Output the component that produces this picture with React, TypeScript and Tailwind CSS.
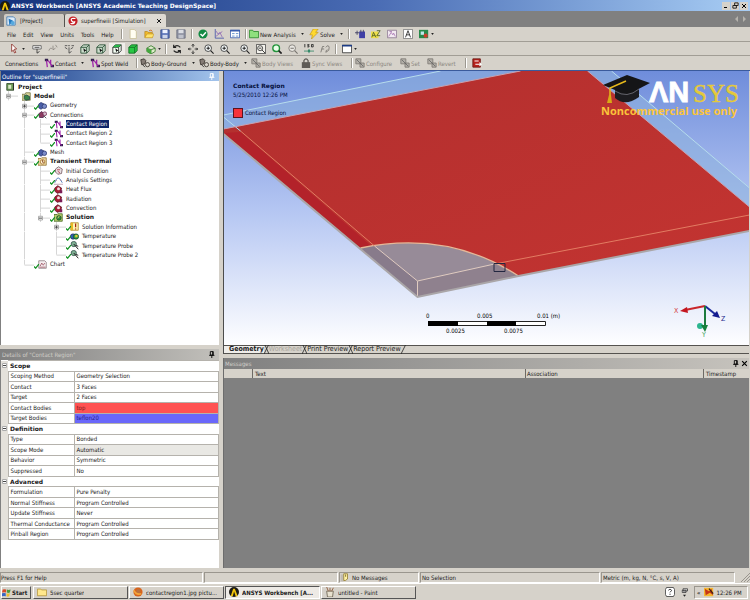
import type { ReactNode } from "react";

const SUNK = "border border-t-[#9a968e] border-l-[#9a968e] border-r-white border-b-white";
const STRONG = "font-['DejaVu_Sans','Liberation_Sans',sans-serif] font-bold";

// small toolbar and tree drawings, all on a 12 x 12 grid
const art: Record<string, ReactNode> = {
  ansys: (
    <>
      <circle cx="6" cy="6" r="6" fill="#1c1a14" />
      <path d="M2 11 5 2h2L4.500 11zM7 2l3.500 9H8L6 5z" fill="#f2c50c" />
    </>
  ),
  project: (
    <>
      <path d="M1 1h8l2 2v8H1z" fill="#dcebf8" stroke="#3f77ad" />
      <path d="M3 3l6 3-5 5z" fill="#257ac0" />
      <circle cx="8" cy="8.500" r="2.500" fill="#57a9de" />
    </>
  ),
  sim: (
    <>
      <circle cx="6" cy="6" r="5.500" fill="#c41f25" />
      <path d="M9 3Q3 2 4 5t4 2q0 3-5 2" fill="none" stroke="#fff" strokeWidth="1.500" />
    </>
  ),
  fresh: <path d="M2.500.5h5l2.500 2.500v8.500H2.500z" fill="#fffef2" stroke="#c9bf97" />,
  open: (
    <>
      <path d="M1 10V3h3l1 1h5v6z" fill="#f0b92c" stroke="#a87813" strokeWidth=".7" />
      <path d="M1 10.500 3.500 6H12l-2 4.500z" fill="#ffe36b" stroke="#b88b1c" strokeWidth=".6" />
      <path d="M6 2q3-2 4 1" fill="none" stroke="#d16b1c" />
    </>
  ),
  save: (
    <>
      <path d="M1 1h10v10H1z" fill="#5a74b8" stroke="#33498a" />
      <path d="M3 1h6v4H3z" fill="#edf2ff" />
      <path d="M3 7h6v4H3z" fill="#ccd5ea" />
    </>
  ),
  saveOff: (
    <>
      <path d="M1 1h10v10H1z" fill="#8f93a2" stroke="#6c7080" />
      <path d="M3 1h6v4H3z" fill="#dbdde3" />
      <path d="M3 7h6v4H3z" fill="#bfc2cc" />
    </>
  ),
  ok: (
    <>
      <circle cx="6" cy="6" r="5.500" fill="#128a43" />
      <path d="m3 6 2.500 2.500L9.500 4" fill="none" stroke="#fff" strokeWidth="1.700" />
    </>
  ),
  graph: (
    <>
      <path d="M1.500 0v11H12" fill="none" stroke="#4457a8" />
      <path d="m2 2 3 4 2-2 3 6M2 9l8-6" fill="none" stroke="#8f6bb6" />
    </>
  ),
  sheet: (
    <>
      <path d="M.5 1.500h11v9H.5z" fill="#fff" stroke="#3a5eae" />
      <path d="M0 1h12v2H0z" fill="#3a5eae" />
      <path d="M2.500 5.500h3M7 5.500h3M2.500 8.500h3M7 8.500h3" stroke="#4f83c6" />
    </>
  ),
  folder: <path d="M.5 10.500v-9h4l1 1.500h6v7.500z" fill="#8fe07e" stroke="#2c8a2c" />,
  bolt: <path d="M5 0h6L8 4h3L3 12l1-5H1z" fill="#ffd92e" stroke="#bc8d0e" strokeWidth=".7" />,
  plusBox: (
    <>
      <path d="M5 3h7v8H5z" fill="#3f3fa6" />
      <path d="M0 4.500h5M2.500 2v5M7 1v3M10 1v3" stroke="#38385c" />
    </>
  ),
  az: (
    <>
      <path d="M0 3h9v8H0z" fill="#efe04c" />
      <path d="M1 10 3 4l3 6M2 8h3M7 2h4L7 8h4" fill="none" stroke="#4e5f24" />
    </>
  ),
  image: (
    <>
      <path d="M.5 1.500h11v9H.5z" fill="#f2e9f1" stroke="#8d7892" />
      <path d="m2 9 3-5 2 3 1-2 2 4M3 3h3" fill="none" stroke="#a97ab3" />
    </>
  ),
  letter: (
    <>
      <path d="M.5.5h11v11H.5z" fill="#fff" stroke="#777" />
      <path d="m3 10 3-8 3 8M4 7h4" fill="none" stroke="#222" />
    </>
  ),
  photo: (
    <>
      <path d="M0 1h11v10H0z" fill="#28884a" />
      <path d="M2 3h4v4H2z" fill="#bde7ea" />
      <circle cx="8" cy="8" r="2.500" fill="#ca3d2b" />
    </>
  ),
  cursor: <path d="m2 0 6 6-3 .3L7 10l-1.500.8L4 7.500 2 9z" fill="#fff" stroke="#8d2f26" />,
  tag: (
    <>
      <path d="M1 2h10v4H1z" fill="#fff" stroke="#555" />
      <path d="M3 4h6M6 6v5l3-2" fill="none" stroke="#333" />
    </>
  ),
  pick: <path d="M1 8q2-5 4-2M6 2v5l3-2M9 1l2 3" fill="none" stroke="#8a8680" />,
  multi: <path d="M1 2h3M5 2h2M9 2h3M1 4l3 2M11 4 8 6M6 4v7l3-2" fill="none" stroke="#444" />,
  cube: (
    <>
      <path d="M1 4h7v7H1zM1 4l3-3h7v7l-3 3M8 4l3-3" fill="#cbdccb" stroke="#234a30" />
      <path d="m4 5 4 3-2 .500L5 10z" fill="#111" />
    </>
  ),
  cubeOn: (
    <>
      <path d="M1 4h7v7H1zM1 4l3-3h7v7l-3 3M8 4l3-3" fill="#f4fff4" stroke="#222" />
      <path d="m1 4 3-3h7L8 4z" fill="#29b74a" />
      <path d="m4 5 4 3-2 .500L5 10z" fill="#111" />
    </>
  ),
  cubeFull: <path d="M1 4h7v7H1zM1 4l3-3h7v7l-3 3M8 4l3-3" fill="#28c744" stroke="#126b24" />,
  orbitCube: (
    <>
      <path d="m1 5 5-3 5 3v4l-5 3-5-3zM1 5l5 2 5-2M6 7v5" fill="#dcefc8" stroke="#397b2f" />
      <path d="m1 5 5 2v5L1 9z" fill="#43a83d" />
    </>
  ),
  rotate: <path d="M10 4Q6 0 2 4M2 1v3h3M2 8q4 4 8 0M10 11V8H7" fill="none" stroke="#222" strokeWidth="1.400" />,
  pan: <path d="M6 0v4M6 8v4M0 6h4M8 6h4M4.500 2 6 .500 7.500 2M4.500 10 6 11.500 7.500 10M2 4.500.5 6 2 7.500M10 4.500 11.500 6 10 7.500" fill="none" stroke="#222" />,
  zoomIn: (
    <>
      <circle cx="5" cy="5" r="4" fill="#f3f7f7" stroke="#333" />
      <path d="m8 8 3.500 3.500M3 5h4M5 3v4" stroke="#222" strokeWidth="1.300" />
    </>
  ),
  zoomBox: (
    <>
      <path d="M.5.5h11v11H.5z" fill="#f4f2ec" stroke="#444" />
      <circle cx="5" cy="5" r="3" fill="none" stroke="#333" />
      <path d="m7 7 4 4M3.500 5h3" stroke="#222" />
    </>
  ),
  zoomFit: (
    <>
      <circle cx="5" cy="5" r="4" fill="#eaffea" stroke="#23943b" strokeWidth="1.700" />
      <path d="m8 8 3.500 3.500" stroke="#222" strokeWidth="2" />
    </>
  ),
  zoomOff: (
    <>
      <circle cx="5" cy="5" r="4" fill="#e9e7e2" stroke="#77746f" />
      <path d="m8 8 3.500 3.500M3 5h4" stroke="#77746f" strokeWidth="1.300" />
    </>
  ),
  iso: (
    <>
      <path d="M1 0v4M4 .5h2.500M4 2h2v1.500H4M9 .5h2v3H9z" fill="none" stroke="#222" />
      <path d="M0 8.500h12M6 6v5" stroke="#368a6a" />
      <circle cx="6" cy="8.500" r="1.500" fill="#368a6a" />
    </>
  ),
  look: <path d="M1 10 3 3h2M2 6h3M7 4q3-4 4 0T7 10q0-3 2-3" fill="none" stroke="#77746f" />,
  win: (
    <>
      <path d="M.5 1.500h11v9H.5z" fill="#fff" stroke="#333" />
      <path d="M0 1h12v2H0z" fill="#1d3c86" />
    </>
  ),
  contact: (
    <>
      <path d="M1 1h4v3H1zM8 8h4v3H8z" fill="#32204c" />
      <path d="m3 3 1 8M5 3l5 7M8 2v6" fill="none" stroke="#9c1fa8" strokeWidth="1.500" />
    </>
  ),
  bodies: (
    <>
      <path d="m1 2 4-1 2 2-1 4-4 1z" fill="#857c76" stroke="#38322d" />
      <circle cx="9" cy="8" r="2.500" fill="#d8d4cc" stroke="#38322d" />
      <path d="m3 8 3 3" stroke="#222" />
    </>
  ),
  bodiesOff: (
    <>
      <path d="M1 1h6v6H1zM6 6h5v5H6z" fill="#b3afa8" stroke="#7d7973" />
      <path d="m2 2 8 8" stroke="#666" />
    </>
  ),
  lock: (
    <>
      <path d="M3.500 6V3q2.500-4 5 0v3" fill="none" stroke="#55514c" strokeWidth="1.400" />
      <path d="M1 5h10v7H1z" fill="#5f5b56" />
    </>
  ),
  exit: (
    <>
      <path d="M1 1h9v10H1z" fill="#b6221c" stroke="#6a1712" />
      <path d="M3 3.500h5M4 7.500h7M9 5.500l2 2-2 2" fill="none" stroke="#fff" strokeWidth="1.300" />
    </>
  ),
  geometry: (
    <>
      <path d="m1 4 3-2 4 2v4l-4 3-3-2z" fill="#4b5fa8" stroke="#26336e" />
      <circle cx="8.500" cy="7" r="3" fill="#7b8cc8" stroke="#26336e" />
    </>
  ),
  links: (
    <>
      <path d="m1 5 4-3 3 3-1 5H2z" fill="#8c3b60" stroke="#452046" />
      <circle cx="9" cy="5" r="2.500" fill="#d7bccc" stroke="#6d244b" />
      <path d="m8 8 3 3" stroke="#233" />
    </>
  ),
  projectTree: (
    <>
      <path d="M1 2h9v9H1z" fill="#6b9a55" stroke="#273d20" />
      <path d="M3 4h4v5H3z" fill="#dbe8c9" />
      <path d="M10 1v10" stroke="#222" />
    </>
  ),
  model: (
    <>
      <path d="M0 3h4l1-2h6v10H0z" fill="#d9d59a" stroke="#6e6b3b" />
      <path d="m3 5 3-1 4 2v4l-5 1-2-2z" fill="#398347" stroke="#1c3f44" />
    </>
  ),
  thermal: (
    <>
      <path d="M0 2h4l1-1h6v10H0z" fill="#ecd8a0" stroke="#8d6d2c" />
      <circle cx="6" cy="6.500" r="3" fill="#fff2cf" stroke="#a06620" />
      <path d="M6 4v3h2" fill="none" stroke="#7c3d18" />
    </>
  ),
  initial: (
    <>
      <path d="m2 4 4-3 5 3-1 6-5 1-3-3z" fill="#e7dfe1" stroke="#6e5258" />
      <path d="M4 5h4M5 7l3 2" stroke="#b02a3c" />
    </>
  ),
  settings: (
    <>
      <path d="M1 9q4-13 10 0" fill="none" stroke="#5a87bd" strokeWidth="1.300" />
      <path d="M0 11h12M2 6h2M8 6h2" stroke="#b08fa0" />
    </>
  ),
  load: (
    <>
      <path d="m1 4 4-3 5 3-1 6-5 1-3-3z" fill="#a82036" stroke="#541322" />
      <circle cx="6" cy="5" r="2" fill="#f1dde0" />
      <path d="M8 7h3v4H8z" fill="#7a1b55" />
    </>
  ),
  solution: (
    <>
      <path d="M0 2h4l1-1h6v10H0z" fill="#b6cf6e" stroke="#42631c" />
      <circle cx="6.500" cy="6.500" r="3" fill="#2b8c3d" stroke="#17441f" />
      <path d="M5 7 7 4" stroke="#ffe76a" />
    </>
  ),
  info: (
    <>
      <path d="M1 1h10v10H1z" fill="#fff3b0" stroke="#a7801b" />
      <path d="M1 1h3v10H1z" fill="#e7b824" />
      <path d="M7.500 2v5M7.500 8.500V10" stroke="#a01f12" strokeWidth="1.600" />
    </>
  ),
  temp: (
    <>
      <circle cx="4" cy="6" r="3.500" fill="#2f5fb4" stroke="#1e2b60" />
      <circle cx="8" cy="6" r="3.500" fill="#2fa04c" stroke="#17441f" />
      <path d="M7 4h3v3H7z" fill="#e6c733" />
    </>
  ),
  probe: (
    <>
      <circle cx="5" cy="4" r="3.500" fill="#7fae93" stroke="#2a4b42" />
      <path d="m5 4 6 7M8 6l3 1" stroke="#222" strokeWidth="1.300" />
    </>
  ),
  chart: (
    <>
      <path d="M1 1h8l2 2v8H1z" fill="#f5eef0" stroke="#85757b" />
      <path d="m3 8 2-4 2 3 2-3M2 9.500h8" fill="none" stroke="#9b4f5f" />
    </>
  ),
  firefox: (
    <>
      <circle cx="6" cy="6" r="5.500" fill="#d9641b" />
      <circle cx="6.500" cy="5" r="2.500" fill="#b9703f" />
      <path d="M1 4q3 6 9 4" stroke="#f3a63a" strokeWidth="2" fill="none" />
    </>
  ),
  dir: <path d="M.5 10.500v-8h4l1 1h6v7z" fill="#ffe88c" stroke="#b6983d" />,
  paint: (
    <>
      <path d="M2 5h8l-1 7H3z" fill="#e8e2d0" stroke="#6c6452" />
      <path d="M4 5 2 0M6 5V1M8 5l2-4" stroke="#8b5330" />
    </>
  ),
  flag: (
    <>
      <path d="M1 2q2-1 4.500 0v4Q3 5 0 6z" fill="#d84b2a" />
      <path d="M6.500 2q2 1 5 0l-1 4q-2 1-4 0z" fill="#4d9b3e" />
      <path d="M0 7q3-1 5 0v4q-2-1-5 0z" fill="#3a66c2" />
      <path d="M6 7q2 1 4.500 0l-1 4q-2 1-3.500 0z" fill="#ecbd2e" />
    </>
  ),
  note: (
    <>
      <path d="M1 2h4v9H1z" fill="#c0bbb2" />
      <path d="M5 1h5v7l-3 2H5z" fill="#fff2a6" stroke="#8d7420" />
      <path d="M7.500 2v3" stroke="#5c4d10" />
    </>
  ),
  help: (
    <>
      <path d="M2 .5h8L11.500 3v6L10 11.500H2L.5 9V3z" fill="#fff" stroke="#333" />
      <path d="M4 4q2-3 4 0L6 6.500M6 8v1.500" fill="none" stroke="#222" />
    </>
  ),
  net: (
    <>
      <path d="M4 1h6v3H4zM3 3h5v3H3z" fill="#ddd" stroke="#333" />
      <path d="m4 9 2 2.500L8 9z" fill="#222" />
    </>
  ),
  shield: (
    <>
      <path d="M0 1h11v10H0z" fill="#f4b730" />
      <path d="m1 2 5 3 3-3 2 8-4-3-5 3z" fill="#c63519" />
      <path d="m6 2 5 6" stroke="#3c210e" strokeWidth="1.500" />
    </>
  ),
  pin: <path d="M4 1h5v6H4zM2 7.500h9M6.500 8v4M8 1v6" fill="none" stroke="currentColor" strokeWidth="1.500" />,
  cross: <path d="m2 2 8 8m0-8-8 8" stroke="currentColor" strokeWidth="2" />,
};

function Icon({ name, className = "size-[10px]" }: { name: string; className?: string }) {
  return (
    <svg viewBox="0 0 12 12" className={`${className} shrink-0`} aria-hidden="true">
      {art[name]}
    </svg>
  );
}

function Caret() {
  return (
    <svg viewBox="0 0 4 3" className="h-[2px] w-[3px] shrink-0" aria-hidden="true">
      <path d="M0 0h4L2 3z" fill="#222" />
    </svg>
  );
}

function Sep() {
  return <span className="mx-[2px] h-[10px] w-[2px] shrink-0 border-l border-[#9b978f] bg-white" />;
}

function Tool({ name, label, caret }: { name: string; label: string; caret?: boolean }) {
  return (
    <button aria-label={label} className={`flex h-3 shrink-0 items-center justify-center ${caret ? "w-5 gap-[2px]" : "w-4"}`}>
      <Icon name={name} />
      {caret && <Caret />}
    </button>
  );
}

type TextToolProps = { name: string; text: string; width: string; caret?: boolean; off?: boolean };

function TextTool({ name, text, width, caret, off }: TextToolProps) {
  return (
    <button disabled={off} className={`flex shrink-0 items-center gap-px whitespace-nowrap ${width} ${off ? "text-[#8b8780]" : ""}`}>
      <Icon name={name} />
      {text}
      {caret && <span className="ml-1"><Caret /></span>}
    </button>
  );
}

// guides: one character for each 16px cell to the left of the icon
const tree = [
  { guides: "", icon: "projectTree", text: "Project", bold: true },
  { guides: "-", icon: "model", text: "Model", bold: true },
  { guides: " +", icon: "geometry", text: "Geometry", check: true },
  { guides: " -", icon: "links", text: "Connections", check: true },
  { guides: " |t", icon: "contact", text: "Contact Region", check: true, selected: true },
  { guides: " |t", icon: "contact", text: "Contact Region 2", check: true },
  { guides: " |l", icon: "contact", text: "Contact Region 3", check: true },
  { guides: " t", icon: "geometry", text: "Mesh", check: true },
  { guides: " -", icon: "thermal", text: "Transient Thermal", bold: true, check: true },
  { guides: " |t", icon: "initial", text: "Initial Condition", check: true },
  { guides: " |t", icon: "settings", text: "Analysis Settings", check: true },
  { guides: " |t", icon: "load", text: "Heat Flux", check: true },
  { guides: " |t", icon: "load", text: "Radiation", check: true },
  { guides: " |t", icon: "load", text: "Convection", check: true },
  { guides: " |-", icon: "solution", text: "Solution", bold: true, check: true },
  { guides: " | +", icon: "info", text: "Solution Information", check: true },
  { guides: " | t", icon: "temp", text: "Temperature", check: true },
  { guides: " | t", icon: "probe", text: "Temperature Probe", check: true },
  { guides: " | l", icon: "probe", text: "Temperature Probe 2", check: true },
  { guides: " l", icon: "chart", text: "Chart", check: true },
];

function Guide({ kind }: { kind: string }) {
  const box = kind === "+" || kind === "-";
  return (
    <svg viewBox="0 0 16 10" preserveAspectRatio="none" className="h-full w-4 shrink-0" aria-hidden="true">
      {kind !== " " && kind !== "l" && <path d="M6.500 0v10" stroke="#d4d4d4" />}
      {kind === "l" && <path d="M6.500 0v5" stroke="#d4d4d4" />}
      {kind !== " " && kind !== "|" && <path d="M6.500 5.500H16" stroke="#d4d4d4" />}
      {box && <path d="M4.500 3.500h4v4h-4z" fill="#fff" stroke="#aaa" />}
      {box && <path d={kind === "+" ? "M5 5.500h3M6.500 4v3" : "M5 5.500h3"} stroke="#444" />}
    </svg>
  );
}

const details = [
  {
    group: "Scope",
    rows: [
      { name: "Scoping Method", value: "Geometry Selection" },
      { name: "Contact", value: "3 Faces" },
      { name: "Target", value: "2 Faces" },
      { name: "Contact Bodies", value: "top", tone: "bg-[#ff5252] text-[#7d1c1c]" },
      { name: "Target Bodies", value: "teflon20", tone: "bg-[#6a67fa] text-[#25238a]" },
    ],
  },
  {
    group: "Definition",
    rows: [
      { name: "Type", value: "Bonded" },
      { name: "Scope Mode", value: "Automatic", tone: "bg-[#e9e8e4]" },
      { name: "Behavior", value: "Symmetric" },
      { name: "Suppressed", value: "No" },
    ],
  },
  {
    group: "Advanced",
    rows: [
      { name: "Formulation", value: "Pure Penalty" },
      { name: "Normal Stiffness", value: "Program Controlled" },
      { name: "Update Stiffness", value: "Never" },
      { name: "Thermal Conductance", value: "Program Controlled" },
      { name: "Pinball Region", value: "Program Controlled" },
    ],
  },
];

function Outline() {
  return (
    <section className="flex min-h-0 flex-[274] flex-col border-l border-[#808080] bg-white">
      <h2 className="flex h-[10px] shrink-0 items-center justify-between bg-linear-to-r from-[#1c3d88] to-[#a3c4ec] pr-1 pl-px text-white">
        Outline for "superfineiii"
        <Icon name="pin" className="size-[7px]" />
      </h2>
      <ul className="mt-px flex h-[187px] flex-col">
        {tree.map((n) => (
          <li key={n.text} className="flex min-h-0 flex-1 items-center pl-px leading-[8px]">
            {[...n.guides].map((g, i) => (
              <Guide key={i} kind={g} />
            ))}
            <span className="relative flex w-4 shrink-0 justify-center">
              <Icon name={n.icon} className="size-[9px]" />
              {n.check && (
                <svg viewBox="0 0 6 6" className="absolute bottom-0 left-0 size-[5px]" aria-hidden="true">
                  <path d="m0 3 2 2 4-5" fill="none" stroke="#159326" strokeWidth="1.500" />
                </svg>
              )}
            </span>
            <button className={`${n.bold ? STRONG : ""} ${n.selected ? "bg-[#0d2468] pr-[2px] text-white" : ""}`}>{n.text}</button>
          </li>
        ))}
      </ul>
    </section>
  );
}

function Details() {
  return (
    <section className="flex min-h-0 flex-[219] flex-col border-l border-[#808080] bg-white">
      <h2 className="flex h-[11px] shrink-0 items-center justify-between bg-linear-to-r from-[#808080] to-[#c2c0bb] pr-1 pl-px text-[#d0cec8]">
        Details of "Contact Region"
        <Icon name="pin" className="size-[7px] text-black" />
      </h2>
      <table className="h-[180px] w-full table-fixed border-collapse leading-[8px]">
        <colgroup>
          <col className="w-[7px]" />
          <col className="w-[66px]" />
          <col />
        </colgroup>
        {details.map((d) => (
          <tbody key={d.group}>
            <tr>
              <td className="bg-[#e4e1db] p-0">
                <svg viewBox="0 0 7 7" className="size-[7px]" aria-hidden="true">
                  <path d="M1.500 1.500h4v4h-4z" fill="#fff" stroke="#aaa" />
                  <path d="M2 3.500h3" stroke="#444" />
                </svg>
              </td>
              <th colSpan={2} className={`border-y border-[#b5b2ac] py-0 pl-[2px] text-left ${STRONG}`}>{d.group}</th>
            </tr>
            {d.rows.map((r) => (
              <tr key={r.name}>
                <td className="bg-[#e4e1db] p-0" />
                <th className="border border-[#b5b2ac] py-0 pl-[2px] text-left font-normal whitespace-nowrap">{r.name}</th>
                <td className={`border border-[#b5b2ac] py-0 pl-[2px] ${r.tone ?? ""}`}>{r.value}</td>
              </tr>
            ))}
          </tbody>
        ))}
      </table>
    </section>
  );
}

function Scene() {
  return (
    <svg viewBox="0 0 526 274" preserveAspectRatio="xMidYMid slice" className="absolute inset-0 size-full" aria-hidden="true">
      <defs>
        <linearGradient id="sky" x1="0" y1="0" x2="0" y2="1">
          <stop offset="0" stopColor="#6f8ddb" />
          <stop offset=".5" stopColor="#b3c5f2" />
          <stop offset="1" stopColor="#fefeff" />
        </linearGradient>
        <linearGradient id="plate" x1="0" y1="0" x2="1" y2="1">
          <stop offset="0" stopColor="#b22f2e" />
          <stop offset="1" stopColor="#c43431" />
        </linearGradient>
      </defs>
      <path d="M0 0h526v274H0z" fill="url(#sky)" />
      <path d="M0 44 217 0h80L0 60zM364 0h24l138 117v20z" fill="#8fb3dd" fillOpacity=".6" />
      <path d="M0 58 297 0h67l162 136v24L295 205 194 226 0 63z" fill="url(#plate)" />
      <path d="m0 62 137 115 12-1L17 61z" fill="#b3222a" />
      <path d="M137 177q88-18 158 28l-101 21z" fill="#978b98" />
      <path d="m137 177 14-2 43 35v16z" fill="#887b8b" />
      <path d="m194 210 77-17 24 12-101 21z" fill="#8f818e" />
      <path d="M137 177q88-18 158 28" fill="none" stroke="#e5b999" strokeWidth="1.300" />
      <path d="m17 60 134 115M271 193l255-49" fill="none" stroke="#e27c62" />
      <path d="m151 175 43 35 77-17M194 210v16" fill="none" stroke="#e0cbc0" />
      <path d="m0 44 217-44M388 0l138 117M0 46l17 14" fill="none" stroke="#b6dcec" />
      <path d="m0 58 297-58M364 0l162 136" fill="none" stroke="#c9a1ae" />
      <path d="m0 63 194 163 101-21 231-45" fill="none" stroke="#aaa6a8" strokeWidth="2" />
      <path d="M270.500 192.500h11v8h-11z" fill="none" stroke="#222640" />
    </svg>
  );
}

function Logo() {
  return (
    <div className="absolute top-[2px] right-[10px] w-[138px]">
      <svg viewBox="0 0 138 46" className="w-full" role="img" aria-label="ANSYS Noncommercial use only">
        <path d="M14 16v9q10 9 24-1v-9z" fill="#1c1c20" />
        <path d="m2 12 24-10 23 8-23 12z" fill="#151517" />
        <path d="M14 18q12 8 24-2" fill="none" stroke="#64646c" />
        <path d="M25 8 9 15v14" fill="none" stroke="#e6b91c" strokeWidth="1.500" />
        <path d="m8 22-2 8h5l-1-8z" fill="#d9a915" />
        <text x="48" y="29" fontSize="29" fontWeight="700" fill="#fff" stroke="#fff" strokeWidth=".8" fontFamily="Liberation Sans, sans-serif">ΛN</text>
        <text x="92" y="29" fontSize="25" fill="#e4c93a" stroke="#e4c93a" strokeWidth=".4" fontFamily="Liberation Serif, serif">SYS</text>
        <text x="0" y="42" fontSize="11" fontWeight="700" fill="#fbc43a" fontFamily="Open Sans, sans-serif">Noncommercial use only</text>
      </svg>
    </div>
  );
}

function Ruler() {
  return (
    <svg viewBox="0 0 140 24" className="absolute bottom-[10px] left-[201px] h-6 w-[140px] text-[6px]" role="img" aria-label="Scale in metres">
      <text x="1" y="7">0</text>
      <text x="52" y="7">0.005</text>
      <text x="112" y="7">0.01 (m)</text>
      <path d="M3.500 10.500h117v4H3.500z" fill="#fff" stroke="#222" />
      <path d="M3 10h30v5H3zM62 10h29v5H62z" fill="#000" />
      <text x="21" y="22">0.0025</text>
      <text x="79" y="22">0.0075</text>
    </svg>
  );
}

function Triad() {
  return (
    <svg viewBox="0 0 56 40" className="absolute right-[20px] bottom-1 h-10 w-14 text-[7px]" role="img" aria-label="Axes">
      <path d="M32 5 12 9" stroke="#c9262b" strokeWidth="2" />
      <path d="m7 10 7-4 1 6z" fill="#c4161f" />
      <path d="m32 5 10 8" stroke="#1a2a9c" strokeWidth="2" />
      <path d="m47 17-8-2 5-5z" fill="#121a90" />
      <path d="M32 5v20" stroke="#1c7a3d" strokeWidth="2" />
      <circle cx="27" cy="25" r="3" fill="#2bb58f" />
      <path d="M28 24h7l-3 7z" fill="#15803d" />
      <text x="1" y="12" fill="#d43b3b">X</text>
      <text x="48" y="20" fill="#1f2a8c">Z</text>
      <text x="29" y="36" fill="#3aa35a">Y</text>
    </svg>
  );
}

function Slash({ both }: { both?: boolean }) {
  return (
    <svg viewBox="0 0 5 9" className="h-[9px] w-[5px] shrink-0" aria-hidden="true">
      <path d={both ? "M4.500 0 0 9M1 0l4 9" : "M4.500 0 0 9"} fill="none" stroke="#222" strokeWidth=".8" />
    </svg>
  );
}

function Viewport() {
  return (
    <section className="flex min-h-0 flex-[283] flex-col border-l border-[#4c4c4c]">
      <div className="relative flex-1 overflow-hidden">
        <Scene />
        <div className="absolute top-[10px] left-[9px] text-[#05103c]">
          <p className={`leading-[9px] ${STRONG}`}>Contact Region</p>
          <p className="leading-[9px]">5/25/2010 12:26 PM</p>
          <p className="mt-[9px] flex items-center gap-[2px] leading-[10px]">
            <span className="size-[10px] border border-[#5b1420] bg-[#f5333b]" />
            Contact Region
          </p>
        </div>
        <Logo />
        <Ruler />
        <Triad />
      </div>
      <nav className="flex h-[9px] shrink-0 items-center border-y border-[#55534f] text-[7px] leading-[7px] whitespace-nowrap">
        <button className="bg-white/60 pl-[5px] font-bold">Geometry</button>
        <Slash both />
        <button disabled className="text-[#a8a49c]">Worksheet</button>
        <Slash both />
        <button>Print Preview</button>
        <Slash both />
        <button>Report Preview</button>
        <Slash />
      </nav>
    </section>
  );
}

function Messages() {
  return (
    <section className="flex min-h-0 flex-[210] flex-col border-l border-[#6c6c6c] bg-[#808080]">
      <h2 className="flex h-[11px] shrink-0 items-center justify-between bg-linear-to-r from-[#808080] to-[#c6c3bd] pr-px pl-px text-[#d0cec8]">
        Messages
        <span className="flex gap-[2px] text-black">
          <button aria-label="Pin messages"><Icon name="pin" className="size-[7px]" /></button>
          <button aria-label="Close messages"><Icon name="cross" className="size-[7px]" /></button>
        </span>
      </h2>
      <table className="w-full table-fixed border-separate border-spacing-0 leading-[9px]">
        <thead>
          <tr className="bg-[#d6d2ca] text-left">
            <th aria-label="Severity" className="w-[29px] border-r border-[#6d6a65] p-0" />
            <th className="border-r border-[#6d6a65] py-0 pl-[2px] font-normal">Text</th>
            <th className="w-[178px] border-r border-[#6d6a65] py-0 pl-px font-normal">Association</th>
            <th className="w-[45px] py-0 pl-[2px] font-normal">Timestamp</th>
          </tr>
        </thead>
      </table>
    </section>
  );
}

function Task({ icon, text, active }: { icon: string; text: string; active?: boolean }) {
  return (
    <button
      className={`flex h-[13px] w-[95px] items-center gap-[3px] border px-[3px] ${
        active
          ? "border-t-[#555] border-r-white border-b-white border-l-[#555] bg-[#edeae5] font-bold"
          : "border-t-white border-r-[#555] border-b-[#555] border-l-white"
      }`}
    >
      <Icon name={icon} />
      <span className="truncate">{text}</span>
    </button>
  );
}

export default function App() {
  return (
    <div className="flex min-h-screen flex-col bg-[#d6d2ca] font-['DejaVu_Sans_Condensed','Liberation_Sans',sans-serif] text-[6px] leading-[9px] text-[#1a1a1a]">
      <header className="flex h-[11px] items-center gap-px bg-linear-to-r from-[#14327c] via-[#4a6cb4] to-[#a8cdf4] text-white">
        <Icon name="ansys" />
        <h1 className={`flex-1 ${STRONG}`}>ANSYS Workbench [ANSYS Academic Teaching DesignSpace]</h1>
        <div className="flex gap-px pr-[2px]">
          <button aria-label="Minimize" className="flex h-2 w-[8px] items-end bg-[#d6d2ca] p-[2px]">
            <span className="h-px w-[3px] bg-black" />
          </button>
          <button aria-label="Restore" className="flex h-2 w-[8px] items-center justify-center bg-[#d6d2ca]">
            <svg viewBox="0 0 8 8" className="size-[7px]" aria-hidden="true">
              <path d="M3 1h4v3H3zM1 4h4v3H1z" fill="none" stroke="#111" />
            </svg>
          </button>
          <button aria-label="Close" className="flex h-2 w-[8px] items-center justify-center bg-[#d6d2ca] text-black">
            <Icon name="cross" className="size-[6px]" />
          </button>
        </div>
      </header>

      <div className="flex h-4 items-end bg-[#808080] pl-1">
        <button className="flex h-[13px] w-[61px] items-center gap-1 rounded-t-[2px] border-r border-[#55534f] bg-[#cfcbc3] pl-[2px]">
          <Icon name="project" />
          [Project]
        </button>
        <button className="flex h-[13px] w-[101px] items-center gap-[3px] rounded-t-[2px] bg-[#dedad3] pl-[3px]">
          <Icon name="sim" />
          <span className="flex-1 text-left">superfineiii [Simulation]</span>
          <Icon name="cross" className="mr-1 size-[6px]" />
        </button>
        <span className="flex-1" />
        <svg viewBox="0 0 14 8" className="mr-[2px] mb-1 h-2 w-[14px]" aria-hidden="true">
          <path d="M4 1v6L1 4zM9 1v6l3-3z" fill="#b5b2ac" />
        </svg>
      </div>

      <div className="flex h-[15px] items-center border-b border-[#a19d95] pl-[7px]">
        <nav className="flex w-[112px] gap-[7px]">
          {["File", "Edit", "View", "Units", "Tools", "Help"].map((m) => (
            <button key={m}>{m}</button>
          ))}
        </nav>
        <Sep />
        <Tool name="fresh" label="New" />
        <Tool name="open" label="Open" />
        <Tool name="save" label="Save" />
        <Tool name="saveOff" label="Save all" />
        <Sep />
        <Tool name="ok" label="Check" />
        <Tool name="graph" label="Graph" />
        <Tool name="sheet" label="Worksheet" />
        <Sep />
        <TextTool name="folder" text="New Analysis" width="w-[60px]" caret />
        <TextTool name="bolt" text="Solve" width="w-[37px]" caret />
        <Sep />
        <Tool name="plusBox" label="Insert" />
        <Tool name="az" label="Label" />
        <Tool name="image" label="Figure" />
        <Tool name="letter" label="Comment" />
        <Tool name="photo" label="Image" caret />
      </div>

      <div className="flex h-[14px] items-center border-b border-[#a19d95] pl-[7px]">
        <Tool name="cursor" label="Select mode" caret />
        <span className="w-[2px]" />
        <Tool name="tag" label="Label" />
        <Tool name="pick" label="Direction" />
        <Tool name="multi" label="Coordinates" />
        <Tool name="cube" label="Vertex" />
        <Tool name="cube" label="Edge" />
        <span className="flex bg-[#f0eeea]"><Tool name="cubeOn" label="Face" /></span>
        <Tool name="cubeFull" label="Body" />
        <span className="w-[2px]" />
        <Tool name="orbitCube" label="Extend selection" caret />
        <Sep />
        <Tool name="rotate" label="Rotate" />
        <Tool name="pan" label="Pan" />
        <Tool name="zoomIn" label="Zoom" />
        <Tool name="zoomIn" label="Box zoom" />
        <span className="w-1" />
        <Tool name="zoomIn" label="Zoom to fit" />
        <Tool name="zoomBox" label="Magnifier" />
        <Tool name="zoomFit" label="Previous view" />
        <Tool name="zoomOff" label="Next view" />
        <Tool name="iso" label="Iso view" />
        <Tool name="look" label="Look at" />
        <Sep />
        <Tool name="win" label="Viewports" caret />
      </div>

      <div className="flex h-[14px] items-center pl-[5px]">
        <span className="w-[39px]">Connections</span>
        <TextTool name="contact" text="Contact" width="w-[46px]" caret />
        <TextTool name="contact" text="Spot Weld" width="w-[44px]" />
        <Sep />
        <TextTool name="bodies" text="Body-Ground" width="w-[59px]" caret />
        <TextTool name="bodies" text="Body-Body" width="w-[52px]" caret />
        <TextTool name="bodiesOff" text="Body Views" width="w-[50px]" off />
        <TextTool name="lock" text="Sync Views" width="w-[48px]" off />
        <Sep />
        <TextTool name="bodiesOff" text="Configure" width="w-[45px]" off />
        <TextTool name="bodiesOff" text="Set" width="w-[27px]" off />
        <TextTool name="bodiesOff" text="Revert" width="w-[36px]" off />
        <Sep />
        <Tool name="exit" label="Close" />
      </div>

      <main className="flex min-h-0 flex-1 border-t border-[#3a5a9c]">
        <div className="flex w-[219px] shrink-0 flex-col gap-1">
          <Outline />
          <Details />
        </div>
        <div className="ml-1 flex min-w-0 flex-1 flex-col gap-1 pr-px">
          <Viewport />
          <Messages />
        </div>
      </main>

      <div className="mt-[3px] flex h-3 items-center gap-px">
        <span className={`w-[203px] ${SUNK}`}>Press F1 for Help</span>
        <span className={`h-[11px] w-[134px] ${SUNK}`} />
        <span className={`flex w-[80px] items-center gap-[3px] ${SUNK}`}>
          <Icon name="note" className="size-[9px]" />
          No Messages
        </span>
        <span className={`flex-1 pl-px ${SUNK}`}>No Selection</span>
        <span className={`w-[134px] pl-px ${SUNK}`}>Metric (m, kg, N, °C, s, V, A)</span>
        <svg viewBox="0 0 14 10" className="h-[10px] w-[14px]" aria-hidden="true">
          <path d="m5 10 9-9M8 10l6-6M11 10l3-3" stroke="#99958d" />
        </svg>
      </div>

      <footer className="flex h-[17px] items-center gap-px border-t border-white pl-px">
        <button className="mr-px flex h-[13px] w-[30px] items-center gap-px border border-t-white border-r-[#555] border-b-[#555] border-l-white font-bold">
          <Icon name="flag" className="size-[9px]" />
          Start
        </button>
        <Task icon="dir" text="5sec quarter" />
        <Task icon="firefox" text="contactregion1.jpg pictu..." />
        <Task icon="ansys" text="ANSYS Workbench [A..." active />
        <Task icon="paint" text="untitled - Paint" />
        <span className="flex-1" />
        <Icon name="help" />
        <Icon name="net" className="mx-1 size-[9px]" />
        <div className={`mr-[2px] flex h-[13px] w-[54px] items-center gap-[3px] pl-[2px] ${SUNK}`}>
          <span className="font-bold">«</span>
          <Icon name="shield" />
          <span>12:26 PM</span>
        </div>
      </footer>
    </div>
  );
}
